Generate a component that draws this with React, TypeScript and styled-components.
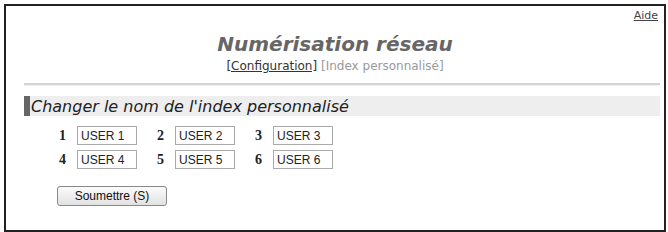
import React from 'react'
import styled, { createGlobalStyle } from 'styled-components'

const GlobalStyle = createGlobalStyle`
  html, body {
    margin: 0;
    padding: 0;
    background: #fff;
  }
`

const Frame = styled.div`
  box-sizing: border-box;
  margin: 4px 2px 0 4px;
  height: 228px;
  border: 2px solid #222;
  background: #fff;
  font-family: 'DejaVu Sans', Verdana, sans-serif;
`

const TopBar = styled.div`
  text-align: right;
  padding: 3px 6px 0 0;
  font-size: 11px;
  line-height: 14px;
`

const HelpLink = styled.a`
  color: #444;
  text-decoration: underline;
`

const Title = styled.h1`
  margin: 9px 0 0;
  text-align: center;
  font-size: 20px;
  line-height: 24px;
  font-weight: bold;
  font-style: italic;
  color: #666;
`

const SubNav = styled.div`
  margin-top: 3px;
  text-align: center;
  font-size: 12px;
  line-height: 15px;
`

const NavItem = styled.span<{ active?: boolean }>`
  color: ${(p) => (p.active ? '#333' : '#999')};
  text-decoration: ${(p) => (p.active ? 'underline' : 'none')};
`

const Rule = styled.div`
  margin: 9px 4px 0 18px;
  height: 2px;
  background: #d4d4d4;
  border-bottom: 1px solid #eee;
`

const SectionHeader = styled.div`
  margin: 10px 4px 0 18px;
  height: 20px;
  display: flex;
  align-items: center;
  background: #eeeeee;
  border-left: 6px solid #666;
  padding-left: 1px;
  font-size: 16px;
  font-style: italic;
  color: #222;
`

const FieldGrid = styled.div`
  display: grid;
  grid-template-columns: repeat(3, 98px);
  row-gap: 5px;
  margin: 10px 0 0 49px;
`

const Field = styled.label`
  display: flex;
  align-items: center;
  gap: 11px;
`

const FieldNum = styled.span`
  width: 11px;
  text-align: right;
  font-family: 'Liberation Serif', 'Times New Roman', serif;
  font-weight: bold;
  font-size: 14px;
  color: #222;
`

const NameInput = styled.input`
  box-sizing: border-box;
  width: 60px;
  height: 19px;
  padding: 0 3px;
  border: 1px solid #aaa;
  font-family: 'Liberation Sans', Arial, sans-serif;
  font-size: 12px;
  color: #222;
  background: #fff;
  outline: none;
`

const SubmitButton = styled.button`
  box-sizing: border-box;
  margin: 17px 0 0 51px;
  width: 110px;
  height: 20px;
  padding: 0;
  border: 1px solid #888;
  border-radius: 3px;
  background: linear-gradient(#fbfbfb, #e2e2e2);
  font-family: 'Liberation Sans', Arial, sans-serif;
  font-size: 12px;
  color: #111;
`

const names = ['USER 1', 'USER 2', 'USER 3', 'USER 4', 'USER 5', 'USER 6']

export default function App() {
  return (
    <>
      <GlobalStyle />
      <Frame>
        <TopBar>
          <HelpLink>Aide</HelpLink>
        </TopBar>
        <Title>Numérisation réseau</Title>
        <SubNav>
          <NavItem active>[Configuration]</NavItem> <NavItem>[Index personnalisé]</NavItem>
        </SubNav>
        <Rule />
        <SectionHeader>Changer le nom de l'index personnalisé</SectionHeader>
        <FieldGrid>
          {names.map((n, i) => (
            <Field key={n}>
              <FieldNum>{i + 1}</FieldNum>
              <NameInput defaultValue={n} />
            </Field>
          ))}
        </FieldGrid>
        <SubmitButton>Soumettre (S)</SubmitButton>
      </Frame>
    </>
  )
}
